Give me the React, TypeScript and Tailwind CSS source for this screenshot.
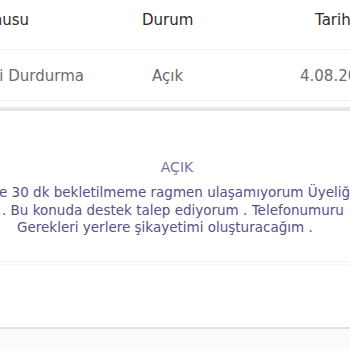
export default function App() {
  return (
    <div
      className="w-[350px] h-[350px] overflow-hidden bg-white"
      style={{ fontFamily: '"DejaVu Sans", sans-serif' }}
    >
      {/* table head */}
      <div className="flex h-[50px] items-center pb-[8px] border-b border-[#f2f2f4] text-[15px] text-[#2b2b2b]">
        <div className="flex w-[29px] shrink-0 justify-end whitespace-nowrap">Konusu</div>
        <div className="ml-[113px] w-[52px] shrink-0 whitespace-nowrap">Durum</div>
        <div className="ml-[121px] whitespace-nowrap">Tarih</div>
      </div>

      {/* row */}
      <div className="flex h-[51px] items-center pt-[2px] border-b border-[#f1f1f3] text-[15px] text-[#6b6b6b]">
        <div className="flex w-[84px] shrink-0 justify-end whitespace-nowrap">Üyeliği Durdurma</div>
        <div className="ml-[68px] w-[32px] shrink-0 whitespace-nowrap">Açık</div>
        <div className="ml-[116px] whitespace-nowrap">4.08.2021</div>
      </div>

      <div className="h-[6px] bg-white" />
      <div className="h-[4px] bg-gradient-to-b from-[#ecebf1] to-[#e1e0e9]" />

      {/* detail */}
      <div className="pt-[46px] text-[#5c4f86]">
        <div className="pl-[4px] text-center text-[14px] text-[#7d7399]">AÇIK</div>
        <div className="mt-[6px] text-[13.5px] leading-[17.5px]">
          <div className="-ml-[1px] whitespace-nowrap">e 30 dk bekletilmeme ragmen ulaşamıyorum Üyeliğimi</div>
          <div className="ml-[2px] whitespace-nowrap">. Bu konuda destek talep ediyorum . Telefonumuru</div>
          <div className="ml-[17px] whitespace-nowrap">Gerekleri yerlere şikayetimi oluşturacağım .</div>
        </div>
      </div>

      <div className="mt-[24px] border-b border-[#f2f2f4]" />
      <div className="mt-[2px] h-[63px] border-t border-[#f5f5f7]" />
      <div className="h-[2px] bg-[#e2e2e4]" />
      <div className="h-[40px] bg-[#fbfbfb]" />
    </div>
  );
}
